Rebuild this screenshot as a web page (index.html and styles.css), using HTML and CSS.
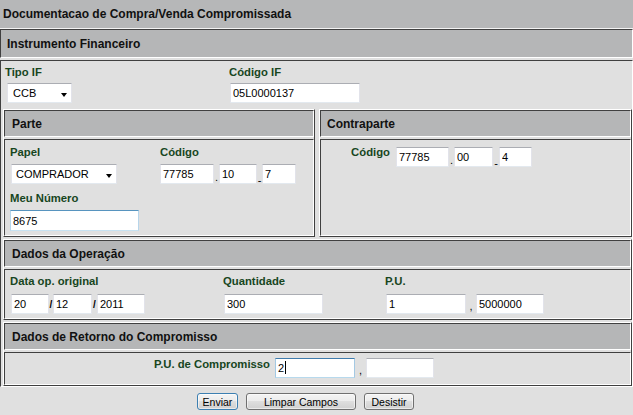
FILE: index.html
```html
<!DOCTYPE html>
<html lang="pt-BR">
<head>
<meta charset="utf-8">
<title>Documentacao de Compra/Venda Compromissada</title>
<link rel="stylesheet" href="styles.css">
</head>
<body>
<div class="title">Documentacao de Compra/Venda Compromissada</div>
<div class="frame">
  <div class="cell hd hd-top">Instrumento Financeiro</div>
  <div class="cell main">
    <div class="if-row">
      <div class="field g4">
        <label class="lbl">Tipo IF</label>
        <span class="sel sel-ccb"><select><option>CCB</option></select></span>
      </div>
      <div class="field g4">
        <label class="lbl">Código IF</label>
        <input class="txt ml1 w130" value="05L0000137">
      </div>
    </div>

    <div class="split">
      <div class="sec sec-parte">
        <div class="cell hd">Parte</div>
        <div class="cell bd bd-parte">
          <div class="parte-row">
            <div class="field g5">
              <label class="lbl">Papel</label>
              <span class="sel sel-papel"><select><option>COMPRADOR</option></select></span>
            </div>
            <div class="field g5">
              <label class="lbl">Código</label>
              <div class="grp">
                <input class="txt w54" value="77785">
                <span class="sep">.</span>
                <input class="txt w38" value="10">
                <span class="sep dash">-</span>
                <input class="txt w34" value="7">
              </div>
            </div>
          </div>
          <div class="field g5 meu">
            <label class="lbl">Meu Número</label>
            <input class="txt hover w129 h21" value="8675">
          </div>
        </div>
      </div>
      <div class="sec sec-contra">
        <div class="cell hd">Contraparte</div>
        <div class="cell bd bd-contra">
          <label class="lbl lbl-right w69">Código</label>
          <div class="grp grp-contra">
            <input class="txt w53" value="77785">
            <span class="sep">.</span>
            <input class="txt w39" value="00">
            <span class="sep dash w6">-</span>
            <input class="txt w33" value="4">
          </div>
        </div>
      </div>
    </div>

    <div class="sec sec-gap">
      <div class="cell hd">Dados da Operação</div>
      <div class="cell bd bd-dados">
        <div class="field g6">
          <label class="lbl">Data op. original</label>
          <div class="grp ml1">
            <input class="txt w38" value="20">
            <span class="sep slash w4">/</span>
            <input class="txt w39" value="12">
            <span class="sep slash">/</span>
            <input class="txt w48" value="2011">
          </div>
        </div>
        <div class="field g6">
          <label class="lbl">Quantidade</label>
          <input class="txt ml1 w99" value="300">
        </div>
        <div class="field g6">
          <label class="lbl">P.U.</label>
          <div class="grp ml1">
            <input class="txt w80" value="1">
            <span class="sep comma w10">,</span>
            <input class="txt w68" value="5000000">
          </div>
        </div>
      </div>
    </div>

    <div class="sec sec-gap">
      <div class="cell hd">Dados de Retorno do Compromisso</div>
      <div class="cell bd bd-ret">
        <label class="lbl lbl-right w265">P.U. de Compromisso</label>
        <div class="grp">
          <span class="caret"><input class="txt focus w80" value="2"></span>
          <span class="sep comma w11">,</span>
          <input class="txt w68" value="">
        </div>
      </div>
    </div>
  </div>
</div>
<div class="btns">
  <button class="btn btn-default w41" type="button">Enviar</button>
  <button class="btn w110" type="button">Limpar Campos</button>
  <button class="btn w50" type="button">Desistir</button>
</div>
</body>
</html>
```

FILE: styles.css
```css
* { box-sizing: border-box; }
html, body { margin: 0; padding: 0; }
body {
  background: #e0e0e0;
  font-family: "Liberation Sans", Arial, sans-serif;
  font-size: 11px;
  color: #000;
  width: 633px;
}

.title {
  height: 29px;
  line-height: 28px;
  background: #b6b7b8;
  border-bottom: 1px solid #f3f3f3;
  padding-left: 3px;
  font-size: 12px;
  font-weight: bold;
  color: #111;
  white-space: nowrap;
}

.frame { display: flex; flex-direction: column; gap: 2px; }

.cell {
  border: 1px solid;
  border-color: #404040 #ffffff #ffffff #404040;
}

.hd {
  background: #b5b6b7;
  display: flex;
  align-items: center;
  flex: none;
  font-size: 12px;
  font-weight: bold;
  color: #111;
  white-space: nowrap;
}
.hd-top { height: 29px; padding-left: 6px; }
.sec .hd { height: 27px; padding-left: 7px; }
.sec-contra .hd { padding-left: 6px; }

.main { padding: 5px 0 0 2px; }

.lbl {
  display: block;
  font-weight: bold;
  font-size: 11.3px;
  line-height: 13px;
  color: #17461e;
  white-space: nowrap;
}
.lbl-right { text-align: right; flex: none; }

.field { display: flex; flex-direction: column; align-items: flex-start; }
.g4 { gap: 4px; }
.g5 { gap: 5px; }
.g6 { gap: 6px; }

.if-row {
  display: grid;
  grid-template-columns: 224px 1fr;
  padding-left: 2px;
  margin-bottom: 6px;
}

.txt {
  display: block;
  flex: none;
  height: 20px;
  margin: 0;
  padding: 0 1px 0 2px;
  border: 1px solid;
  border-color: #abadb3 #e2e3ea #e3e9ef #e2e3ea;
  border-radius: 0;
  background: #fff;
  font: 11px "Liberation Sans", Arial, sans-serif;
  color: #000;
  outline: none;
}
.txt.hover { border-color: #5794bf #b7d5ea #c7e2f1 #b7d5ea; }
.txt.focus { border-color: #3d7bad #a4c9e3 #b7d9ed #a4c9e3; }
.h21 { height: 21px; }

.sel { position: relative; display: block; margin-left: 1px; }
.sel-ccb { margin-left: 2px; }
.sel select {
  -webkit-appearance: none;
  appearance: none;
  display: block;
  height: 20px;
  margin: 0;
  padding: 0 0 0 5px;
  border: 1px solid;
  border-color: #abadb3 #e2e3ea #e3e9ef #e2e3ea;
  border-radius: 0;
  background: #fff;
  font: 11px "Liberation Sans", Arial, sans-serif;
  color: #000;
  outline: none;
}
.sel-ccb select { width: 65px; }
.sel-papel select { width: 106px; padding-left: 4px; }
.sel::after {
  content: "";
  position: absolute;
  top: 10px;
  right: 5px;
  border-top: 4px solid #000;
  border-left: 3.5px solid transparent;
  border-right: 3.5px solid transparent;
}

.grp { display: flex; align-items: stretch; }
.ml1 { margin-left: 1px; }

.sep {
  flex: none;
  width: 5px;
  align-self: flex-end;
  text-align: center;
  font-size: 11px;
  line-height: 14px;
  color: #000;
}
.sep.dash { line-height: 8px; }
.sep.slash { line-height: 18px; font-weight: bold; font-size: 10px; }
.sep.comma { line-height: 16px; }

.split { display: flex; gap: 4px; margin-bottom: 2px; }
.sec {
  display: flex;
  flex-direction: column;
  gap: 2px;
  border: 1px solid;
  border-color: #ffffff #404040 #404040 #ffffff;
}
.sec-parte { width: 312px; flex: none; }
.sec-contra { flex: 1 1 auto; }
.sec-gap { margin-bottom: 2px; }
.sec-gap:last-child { margin-bottom: 0; }

.bd { flex: 1 0 auto; }
.bd-parte { height: 97px; padding: 6px 5px 0 5px; }
.parte-row {
  display: grid;
  grid-template-columns: 150px 1fr;
  margin-bottom: 8px;
}
.bd-contra { display: flex; gap: 6px; padding-top: 6px; align-items: flex-start; }
.grp-contra { margin-top: 1px; }

.bd-dados {
  height: 50px;
  padding: 5px 0 0 5px;
  display: grid;
  grid-template-columns: 213px 162px 1fr;
  align-content: start;
}

.bd-ret {
  height: 33px;
  padding-top: 5px;
  display: flex;
  gap: 5px;
  align-items: flex-start;
}

.caret { position: relative; display: block; }
.caret::after {
  content: "";
  position: absolute;
  left: 10px;
  top: 3px;
  width: 1px;
  height: 13px;
  background: #000;
}

.btns {
  display: flex;
  justify-content: center;
  gap: 8px;
  padding-right: 22px;
  margin-top: 6px;
}
.btn {
  height: 17px;
  margin: 0;
  padding: 0;
  border: 1px solid #707070;
  border-radius: 3px;
  background: linear-gradient(#f4f4f4, #ececec 45%, #dedede 50%, #d0d0d0);
  box-shadow: inset 0 0 0 1px rgba(255, 255, 255, 0.55);
  font: 10.5px "Liberation Sans", Arial, sans-serif;
  color: #000;
}
.btn-default { border-color: #3c7fb1; }

.w4 { width: 4px; }
.w6 { width: 6px; }
.w10 { width: 10px; }
.w11 { width: 11px; }
.w33 { width: 33px; }
.w34 { width: 34px; }
.w38 { width: 38px; }
.w39 { width: 39px; }
.w41 { width: 41px; }
.w48 { width: 48px; }
.w50 { width: 50px; }
.w53 { width: 53px; }
.w54 { width: 54px; }
.w68 { width: 68px; }
.w69 { width: 69px; }
.w80 { width: 80px; }
.w99 { width: 99px; }
.w110 { width: 110px; }
.w129 { width: 129px; }
.w130 { width: 130px; }
.w265 { width: 265px; }
```
